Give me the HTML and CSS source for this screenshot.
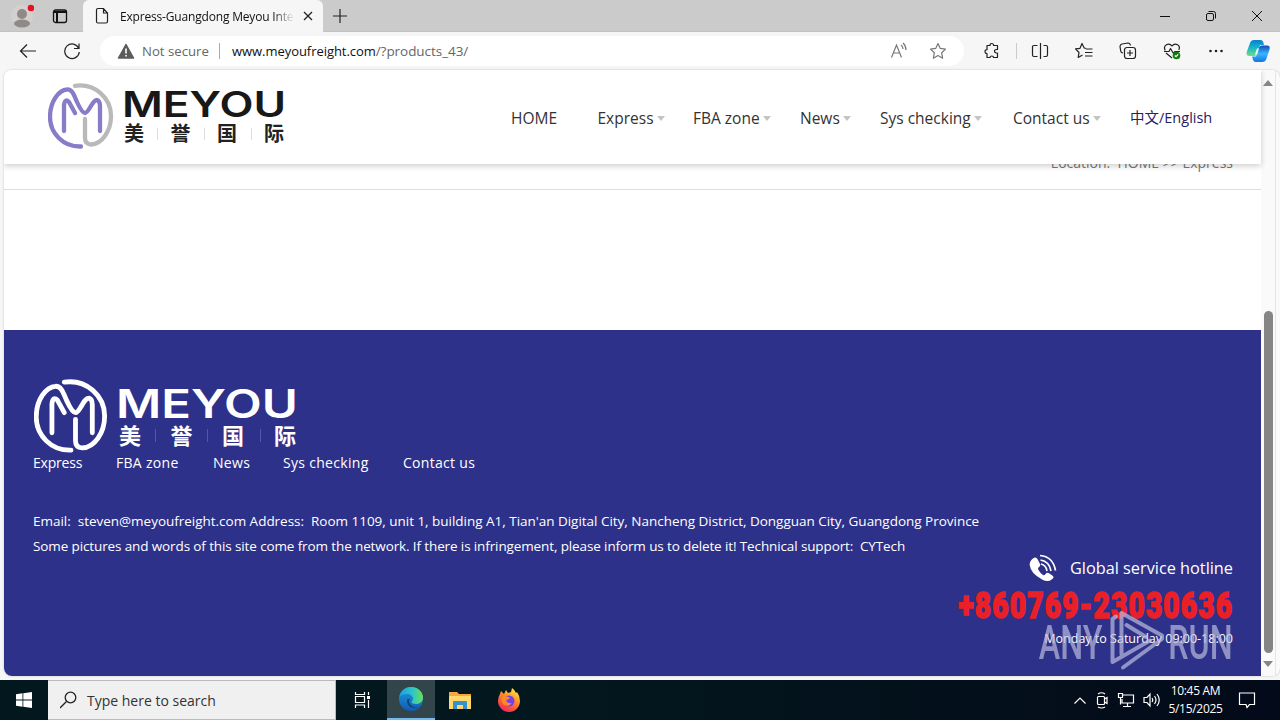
FILE: index.html
```html
<!DOCTYPE html>
<html lang="en">
<head>
<meta charset="utf-8">
<title>Express-Guangdong Meyou International</title>
<link rel="stylesheet" href="styles.css">
</head>
<body>
<svg class="defs" width="0" height="0">
  <symbol id="mark" viewBox="0 0 66 66">
    <g fill="none" stroke-width="4.3" stroke-linecap="round" stroke-linejoin="round">
      <path class="arc" d="M27 2.800C47 0 63 15 63 33C63 48 54 61 43 61.500Q37 61 37 55V36"/>
      <path class="em" d="M33 63.500C15 64 2 50 2 34C2 18 11 7 19 6.500C24 6 26 12 29 19Q34 30 37 30C41 30 44 17 49 17Q52 18 52 23V48M16 48V22Q17 15 21 19L27 30"/>
    </g>
  </symbol>
</svg>

<div class="tabbar">
  <svg class="profile" width="24" height="26" viewBox="0 0 24 26"><circle cx="12" cy="13" r="11" fill="#d3d0cd"/><circle cx="12" cy="11" r="5" fill="#8d8a87"/><ellipse cx="12" cy="20.500" rx="8" ry="4" fill="#8d8a87"/><circle cx="21" cy="5" r="3.3" fill="#e81123"/></svg>
  <svg class="workspaces" width="16" height="16" viewBox="0 0 16 16" fill="none" stroke="#111" stroke-width="1.3"><rect x="1.5" y="2" width="13" height="12.5" rx="2"/><path d="M2 4h12M5 5v9" stroke-width="2"/></svg>
  <div class="tab">
    <svg width="14" height="18" viewBox="0 0 14 18" fill="none" stroke="#222" stroke-width="1.2"><path d="M1.5 3q0-1.500 1.500-1.500h5.500l4 4.500v8.500q0 1.500-1.500 1.500h-8q-1.500 0-1.500-1.500zM8.500 1.500v4.500h4"/></svg>
    <span class="tab-title">Express-Guangdong Meyou International</span>
    <svg width="10" height="10" viewBox="0 0 10 10" stroke="#222" stroke-width="1.3"><path d="M1 1l8 8M9 1L1 9"/></svg>
  </div>
  <svg class="newtab" width="16" height="16" viewBox="0 0 16 16" stroke="#222" stroke-width="1.2"><path d="M1 8h14M8 1v14"/></svg>
  <div class="wincontrols">
    <svg width="12" height="12" viewBox="0 0 12 12" fill="none" stroke="#111"><path d="M1 6.500h10"/></svg>
    <svg width="12" height="12" viewBox="0 0 12 12" fill="none" stroke="#111"><rect x="1.500" y="3.500" width="7" height="7" rx="1.500"/><path d="M3.500 1.500h5q2 0 2 2v5"/></svg>
    <svg width="12" height="12" viewBox="0 0 12 12" fill="none" stroke="#111"><path d="M1 1l10 10M11 1L1 11"/></svg>
  </div>
</div>

<div class="toolbar">
  <svg class="back" width="18" height="16" viewBox="0 0 18 16" fill="none" stroke="#222" stroke-width="1.2"><path d="M8 1.500L1.500 8 8 14.500M1.500 8H17"/></svg>
  <svg class="reload" width="18" height="18" viewBox="0 0 18 18" fill="none" stroke="#222" stroke-width="1.2"><path d="M15.800 6.500A7.300 7.300 0 1 0 16.300 10M16 1.500V6.500H11"/></svg>
  <div class="address">
    <svg width="18" height="16" viewBox="0 0 18 16"><path d="M9 1.500L16.500 15h-15z" fill="#5c5c5c" stroke="#5c5c5c" stroke-width="1.500" stroke-linejoin="round"/><path d="M9 5.500v5M9 12v1.500" stroke="#fff" stroke-width="1.600"/></svg>
    <span class="insecure">Not secure</span>
    <i class="bar"></i>
    <span class="url">www.meyoufreight.com<em>/?products_43/</em></span>
    <svg class="read" width="18" height="18" viewBox="0 0 18 18" fill="none" stroke="#777" stroke-width="1.200"><path d="M1.500 15.500L6.500 3l5 12.500M3.500 11h6M11 3q2 1.500 2 4M13 1q3 2.500 3 7"/></svg>
    <svg width="18" height="18" viewBox="0 0 18 18" fill="none" stroke="#777" stroke-width="1.200" stroke-linejoin="round"><path d="M9 1.500l2.300 4.900 5.200.7-3.800 3.700.9 5.400L9 13.600l-4.600 2.600.9-5.400L1.500 7.100l5.200-.7z"/></svg>
  </div>
  <div class="tools">
    <svg width="18" height="18" viewBox="0 0 18 18"><path d="M4 3.500h3q0-2 1.800-2t1.800 2h3.900v4h-1q-2 0-2 1.700t2 1.800h1v4.500h-4q0-1.500-1.700-1.500t-1.800 1.500H4v-4q-2 0-2-1.900t2-1.900z"/></svg>
    <i class="bar"></i>
    <svg width="18" height="18" viewBox="0 0 18 18"><path d="M6.500 3.500H3Q1.500 3.500 1.500 4.500v8.500q0 1.500 1.500 1.500h3.500M9.500 1v16M12.500 3.500h2.500q1.500 0 1.500 1.500v8q0 1.500-1.500 1.500h-2.500"/></svg>
    <svg width="18" height="18" viewBox="0 0 18 18"><path d="M11 6.500L9.200 6 7 1.500 5 6.300l-4.500.5 3.500 3.700-.8 5L7.500 13M11 7h6.500M10 10.500h7.500M10 14h7.500"/></svg>
    <svg width="18" height="18" viewBox="0 0 18 18"><path d="M4 11Q2 11 1.700 9L1 4.500Q1 2.500 3 2l6-1q2 0 2.500 2.500"/><rect x="5.500" y="5.500" width="11" height="11" rx="2.500"/><path d="M11 8v6M8 11h6"/></svg>
    <svg width="18" height="18" viewBox="0 0 18 18"><path d="M2.200 8.500C-.5 3 6 .2 9 4c3-3.800 9.500-1 6.700 4M1 9.500h5l1.500-3 3 5 1.300-2H17M3 11l6 5"/><circle cx="13.500" cy="13.500" r="3.800" fill="#107c10" stroke="none"/><path d="M11.800 13.500l1.200 1.200 2.200-2.300" stroke="#fff"/></svg>
    <svg width="18" height="18" viewBox="0 0 18 18"><g fill="#222" stroke="none"><circle cx="3.500" cy="9" r="1.300"/><circle cx="9" cy="9" r="1.300"/><circle cx="14.500" cy="9" r="1.300"/></g></svg>
  </div>
  <svg class="copilot" width="24" height="24" viewBox="0 0 24 24">
    <defs><linearGradient id="cp1" x2="0" y2="1"><stop stop-color="#087ed0"/><stop offset=".5" stop-color="#16b8c8"/><stop offset="1" stop-color="#76dc80"/></linearGradient><linearGradient id="cp2" x2="0" y2="1"><stop stop-color="#1449ba"/><stop offset=".5" stop-color="#38b8fa"/><stop offset="1" stop-color="#1672e8"/></linearGradient></defs>
    <path d="M8 1h6q3 0 3.500 3l.5 2h-4l-3 9q-.7 2-3 2H3q-3 0-2.300-4L4 4q1-3 4-3z" fill="url(#cp1)"/>
    <path d="M16 23h-6q-3 0-3.500-4L6 17.500h4l3-9q.7-2 3-2h5q3.500 0 2.500 4l-3 9q-1 3.500-4.500 3.500z" fill="url(#cp2)"/><path d="M11 9.500h2l-2 6h-2z" fill="#fff"/>
  </svg>
</div>

<div class="viewport">
  <div class="page">
    <header class="site-header">
      <svg class="logo" width="238" height="68" viewBox="0 0 238 68">
        <use href="#mark" x="0" y="1" width="66" height="66"/>
        <text class="wordmark" x="74" y="35" textLength="164" lengthAdjust="spacingAndGlyphs">MEYOU</text>
        <g class="hanzi"><text x="76" y="59">美</text><text x="122.500" y="59">誉</text><text x="169" y="59">国</text><text x="216" y="59">际</text></g>
        <path d="M109.500 46v12M156.500 46v12M203.500 46v12" stroke="#ddd"/>
      </svg>
      <nav class="menu">
        <a>HOME</a><a class="drop">Express</a><a class="drop">FBA zone</a><a class="drop">News</a><a class="drop">Sys checking</a><a class="drop">Contact us</a><a class="lang">中文/English</a>
      </nav>
    </header>
    <div class="crumb"><span>Location:&nbsp; HOME &gt;&gt; Express</span></div>
    <main class="content"></main>
    <footer class="footer">
      <svg class="logo-light" width="264" height="75" viewBox="0 0 264 75">
        <use href="#mark" x="0" y="1" width="74" height="74"/>
        <text class="wordmark" x="82" y="39.500" textLength="182" lengthAdjust="spacingAndGlyphs">MEYOU</text>
        <g class="hanzi"><text x="85" y="65.500">美</text><text x="136.500" y="65.500">誉</text><text x="188" y="65.500">国</text><text x="240" y="65.500">际</text></g>
        <path d="M121.500 51v13M173.500 51v13M226.500 51v13" stroke="#5557a8"/>
      </svg>
      <div class="links"><a class="tight">Express</a><a>FBA zone</a><a>News</a><a>Sys checking</a><a>Contact us</a></div>
      <p class="email">Email:&nbsp; steven@meyoufreight.com Address:&nbsp; Room 1109, unit 1, building A1, Tian'an Digital City, Nancheng District, Dongguan City, Guangdong Province</p>
      <p class="legal">Some pictures and words of this site come from the network. If there is infringement, please inform us to delete it! Technical support:&nbsp; CYTech</p>
      <div class="hotline">
        <div class="hot-title">
          <svg width="28" height="28" viewBox="0 0 28 28" fill="none" stroke="#fff" stroke-width="1.700"><path d="M4 4.500Q7 2 9 6l2 4q1 2-1.500 3.500-1 .8 0 2.500 2 3.500 4.500 5 1.200.8 2.500-1 1.500-2 3.500-.8l3 2q3 2 0 4-4 3.500-9.500.5Q1.500 19.500.7 11 .5 7 4 4.500z" fill="#fff" stroke="none"/><path d="M12 10q5 1 6 7M11.500 6q9 1.500 10.500 11M11 1.500q13 1 15.500 15"/></svg>
          <span>Global service hotline</span>
        </div>
        <svg class="phone" width="276" height="36" viewBox="0 0 276 36"><text transform="scale(.76 1)" x="2" y="31.500" textLength="360">+860769-23030636</text></svg>
        <div class="hours">Monday to Saturday 09:00-18:00</div>
      </div>
    </footer>
    <svg class="watermark" width="196" height="64" viewBox="0 0 196 64">
      <g class="wm-text"><text transform="scale(.7 1)" x="1" y="50" textLength="91" lengthAdjust="spacingAndGlyphs">ANY</text><text transform="scale(.7 1)" x="186" y="50" textLength="92" lengthAdjust="spacingAndGlyphs">RUN</text></g>
      <path d="M78 7.500L74.500 10V53L112 31.500M83.500 45V4L124 26.500V30L85 58.500M88.500 16L108 28" fill="none" stroke="#b9b9dc" stroke-width="4" stroke-linecap="round" stroke-linejoin="round" opacity=".72"/>
    </svg>
  </div>
  <div class="scroll">
    <svg width="10" height="6" viewBox="0 0 10 6"><path d="M0 6L5 0l5 6z" fill="#858585"/></svg>
    <div class="thumb"></div>
    <svg width="10" height="6" viewBox="0 0 10 6"><path d="M0 0h10L5 6z" fill="#858585"/></svg>
  </div>
</div>

<div class="taskbar">
  <div class="start"><svg width="16" height="16" viewBox="0 0 16 16" fill="#fff"><path d="M0 2.300l6.500-1v6.300H0zM7.300 1.200L16 0v7.600H7.300zM0 8.400h6.500v6.400L0 13.800zM7.300 8.400H16V16l-8.700-1.200z"/></svg></div>
  <div class="search"><svg width="18" height="18" viewBox="0 0 18 18" fill="none" stroke="#222" stroke-width="1.300"><circle cx="10.500" cy="6.500" r="5.300"/><path d="M6.500 10.500L0 17"/></svg><span>Type here to search</span></div>
  <div class="app"><svg width="18" height="18" viewBox="0 0 18 18" fill="none" stroke="#fff" stroke-width="1.200"><path d="M1.500 1v2.500h9V1M1.500 17v-3h9v3M1.500 5.500h9v6h-9zM14.500 1v3M14.500 9v8"/><path d="M13 5h3v3h-3z" fill="#fff" stroke="none"/></svg></div>
  <div class="app active"><svg width="26" height="26" viewBox="0 0 26 26">
    <defs><linearGradient id="e1"><stop stop-color="#1aa0df"/><stop offset=".55" stop-color="#2cc5ca"/><stop offset="1" stop-color="#6be052"/></linearGradient><linearGradient id="e2" x2="0" y2="1"><stop stop-color="#1a9ce0"/><stop offset="1" stop-color="#125bb0"/></linearGradient></defs>
    <circle cx="13" cy="13" r="12" fill="url(#e2)"/><path d="M1.200 11C3 4 8 1 13 1c7 0 12 5 12 10.500 0 4-3 6.500-7 6.500-3 0-4.500-1-4.500-2s1.500-1.500 1.500-3.500C15 10 12 8 9 8c-3 0-6 1-7.800 3z" fill="url(#e1)"/><path d="M9.500 13c-2 6 4 11 12 7.500l1.500-1C18 23 12 20 11 16q-.3-2 1-3z" fill="#14406f"/></svg></div>
  <div class="app"><svg width="22" height="19" viewBox="0 0 22 19"><path d="M0 1h8l2 2h12v15H0z" fill="#f5a83d"/><path d="M0 5h22v13H0z" fill="#ffd869"/><path d="M4 18v-7q0-1 1-1h12q1 0 1 1v7h-4v-4H8v4z" fill="#3590cf"/></svg></div>
  <div class="app"><svg width="24" height="25" viewBox="0 0 24 25">
    <defs><linearGradient id="f1" x1=".8" x2=".3" y2="1"><stop stop-color="#fff24a"/><stop offset=".45" stop-color="#ff8a24"/><stop offset="1" stop-color="#f6215e"/></linearGradient></defs>
    <path d="M3 6l1-3 3 3 2-4 2 3 3-1 1-4q3 2 4 5l1-1q3 4 3 9A11 11 0 1 1 1 13q0-4 2-7z" fill="url(#f1)"/><circle cx="12" cy="13" r="5.500" fill="#7542e5"/><path d="M5 9q5-2 8 1-2 2-4 2 1 4 6 3-4 5-9 1-2-3-1-7z" fill="#ff8a24"/></svg></div>
  <div class="tray">
    <svg width="14" height="9" viewBox="0 0 14 9"><path d="M1.500 7.500L7 2l5.500 5.500"/></svg>
    <svg width="14" height="18" viewBox="0 0 14 18"><rect x="2.500" y="5.500" width="7" height="8" rx="1"/><path d="M9.500 8l2.500-1.500v6L9.500 11M3 3q3.500-2.500 7 0M3 16q3.500 2 7 0"/></svg>
    <svg width="18" height="16" viewBox="0 0 18 16"><path d="M6 3h10.500v8H5V7M10.500 11v3.500M6 14.500h8M1.500 1.500h4v4h-4zM3.500 5.500v7"/></svg>
    <svg width="18" height="16" viewBox="0 0 18 16"><path d="M1 5.500h3l3-3.500v12L4 10.500H1zM9 6q1.500 2 0 4M11.500 4q3 4 0 8M14 2q4.500 6 0 12"/></svg>
    <div class="clock"><span>10:45 AM</span><span>5/15/2025</span></div>
    <svg width="18" height="18" viewBox="0 0 18 18"><path d="M1.500 2h15v11.500h-5L9 16.500 8 13.500H1.500z"/></svg>
  </div>
</div>
</body>
</html>
```
FILE: styles.css
```css
* { box-sizing: border-box; }
body { margin: 0; width: 1280px; height: 720px; overflow: hidden; display: flex; flex-direction: column; background: #f6f6f6; font-family: "Open Sans", "Noto Sans CJK SC", sans-serif; color: #222; }
svg { display: block; flex: none; }
span, a, p { white-space: nowrap; }
p { margin: 0; }
.defs { position: absolute; }

.tabbar { height: 32px; flex: none; display: flex; align-items: center; background: #cbcbcb; border-bottom: 1px solid #c2c2c2; }
.profile { margin-left: 10px; }
.workspaces { margin-left: 18px; }
.tab { width: 240px; height: 32px; margin-left: 15px; padding-left: 12px; display: flex; align-items: center; background: #f6f6f6; border-radius: 6px 6px 0 0; align-self: flex-start; }
.tab-title { width: 174px; margin: 0 9px 0 11px; overflow: hidden; font-size: 12px; letter-spacing: -.18px; color: #111; -webkit-mask-image: linear-gradient(90deg, #000 88%, transparent); mask-image: linear-gradient(90deg, #000 88%, transparent); }
.newtab { margin-left: 9px; }
.wincontrols { margin-left: auto; margin-right: 17px; display: flex; gap: 34px; }

.toolbar { height: 38px; flex: none; display: flex; align-items: center; }
.back { margin-left: 19px; }
.reload { margin-left: 26px; }
.address { width: 864px; height: 30px; margin-left: 19px; padding: 0 17px; display: flex; align-items: center; background: #fff; border-radius: 15px; font-size: 13px; }
.insecure { width: 67px; margin-left: 7px; font-size: 13.200px; color: #666; }
.bar { width: 1px; height: 16px; background: #aaa; }
.address .bar { margin: 0 12px 0 10px; }
.url { color: #111; letter-spacing: -.05px; }
.url em { font-style: normal; font-size: 13.500px; color: #666; }
.read { margin-left: auto; margin-right: 21px; }
.tools { display: flex; align-items: center; margin-left: 19px; gap: 26px; }
.tools .bar { margin: 0 -12px 0 -11px; background: #ccc; }
.tools svg { fill: none; stroke: #222; stroke-width: 1.200; stroke-linejoin: round; }
.copilot { margin-left: auto; margin-right: 10px; }

.viewport { height: 606px; flex: none; display: flex; margin-left: 4px; background: #fafafa; border-radius: 8px; overflow: hidden; box-shadow: 0 0 2px #bbb; }
.page { position: relative; width: 1257px; display: flex; flex-direction: column; background: #fff; }
.site-header { position: relative; z-index: 1; height: 94px; flex: none; display: flex; align-items: flex-start; padding: 12px 0 0 44px; background: #fff; box-shadow: 0 2px 6px rgba(0,0,0,.2); }
.arc { stroke: var(--arc, #b9b9b9); }
.em { stroke: var(--em, #887cc8); }
.logo { margin-right: 225px; }
.wordmark { font: 600 35px Inter, sans-serif; fill: #181818; }
.hanzi { font: 700 20px "Noto Sans CJK SC", sans-serif; fill: #222; }
.menu { display: grid; grid-template-columns: 86.500px 95.500px 107px 80px 133px 117px 90px; padding-top: 24px; font-size: 15.500px; line-height: 24px; color: #333; }
.menu a { display: flex; align-items: center; }
.drop::after { content: ""; margin-left: 3px; border: 4px solid transparent; border-top: 5px solid #c4c4c4; border-bottom: 0; }
.menu .lang { color: #262164; font-size: 14.500px; }
.crumb { height: 26px; flex: none; padding-right: 28px; border-bottom: 1px solid #ddd; display: flex; justify-content: flex-end; font-size: 14px; line-height: 20px; color: #777; }
.crumb span { margin-top: -11px; }
.content { height: 140px; flex: none; }
.footer { height: 346px; flex: none; padding: 48px 28px 0 29px; display: flex; flex-direction: column; background: #2e3189; color: #fff; font-size: 14px; line-height: 24px; }
.logo-light { margin-left: 1px; --arc: #fff; --em: #fff; }
.logo-light .wordmark { font-size: 39px; fill: #fff; }
.logo-light .hanzi { font-size: 22px; fill: #fff; }
.links { display: grid; grid-template-columns: 83px 97px 70px 120px 80px; margin-top: -2px; letter-spacing: .3px; }
.links .tight { letter-spacing: -.2px; }
.email { margin-top: 34px; font-size: 13.500px; letter-spacing: -.02px; }
.legal { margin-top: 1px; font-size: 13.500px; letter-spacing: -.12px; }
.hotline { display: flex; flex-direction: column; align-items: flex-end; margin-top: -4px; }
.hot-title { display: flex; align-items: center; gap: 13px; font-size: 16.300px; height: 28px; }
.phone { margin-top: 4px; font: 900 37px Roboto, sans-serif; fill: #eb2027; stroke: #eb2027; stroke-width: 1.500px; }
.hours { font-size: 12.500px; margin-top: 5px; }
.watermark { position: absolute; right: 27px; bottom: 3px; }
.wm-text { font: 500 49px Roboto, sans-serif; fill: #b9b9dc; opacity: .7; }
.scroll { width: 15px; margin-right: 4px; display: flex; flex-direction: column; align-items: center; padding: 10px 0 9px; background: #fafafa; border-right: 1px solid #e5e5e5; }
.thumb { width: 9px; height: 342px; margin: auto 0 8px; border-radius: 5px; background: #858585; }

.taskbar { height: 40px; flex: none; margin-top: 4px; display: flex; background: linear-gradient(90deg, #03171e, #03171e 45%, #030a19); color: #fff; }
.start { width: 48px; display: grid; place-items: center; }
.search { width: 288px; margin-right: 2px; display: flex; align-items: center; padding-left: 12px; gap: 9px; background: #f0f0f0; border: 1px solid #bbb; border-left: 0; color: #333; font-size: 14px; }
.app { width: 49px; display: grid; place-items: center; }
.app.active { width: 48px; background: #32454b; border-bottom: 2px solid #76b9ed; }
.tray { margin-left: auto; display: flex; align-items: center; padding-right: 24px; }
.tray svg { fill: none; stroke: #fff; stroke-width: 1.200; margin-right: 8px; }
.tray svg:last-child { margin: 0; }
.clock { width: 53px; margin-right: 16px; display: flex; flex-direction: column; align-items: center; font-size: 12px; line-height: 18px; }
.clock span { letter-spacing: -.3px; }
```
